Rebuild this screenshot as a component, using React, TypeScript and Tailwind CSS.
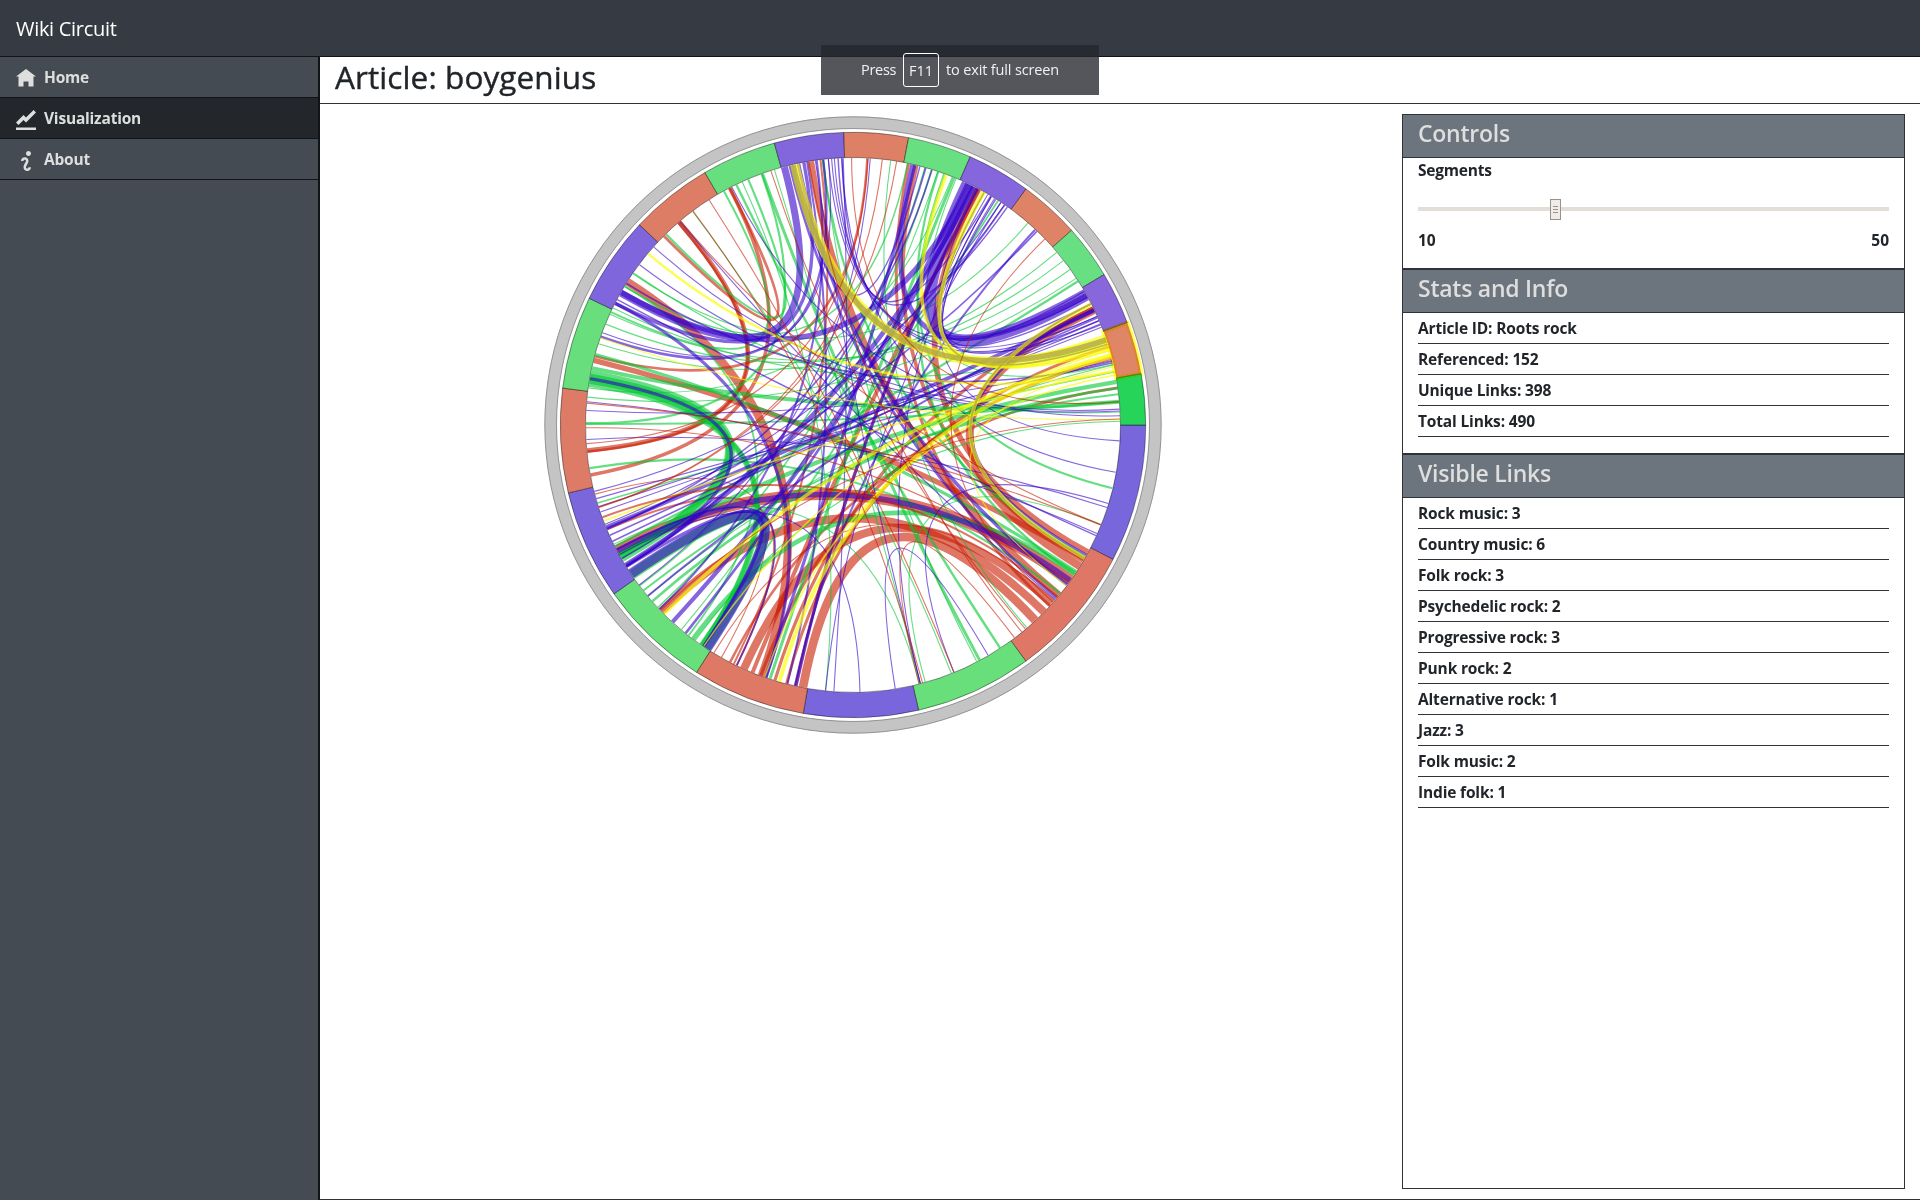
import React from "react";

const CX = 310;
const CY = 310;

const point = (radius: number, degrees: number) => {
  const t = (degrees * Math.PI) / 180;
  return `${(CX + radius * Math.cos(t)).toFixed(2)},${(CY + radius * Math.sin(t)).toFixed(2)}`;
};

const ringSlice = (inner: number, outer: number, from: number, to: number) =>
  `M${point(outer, from)}A${outer},${outer} 0 0 1 ${point(outer, to)}L${point(inner, to)}A${inner},${inner} 0 0 0 ${point(inner, from)}Z`;

const CHORD_RADIUS = 267;

const chordPath = (a: number, b: number) => `M${point(CHORD_RADIUS, a)}Q${CX},${CY} ${point(CHORD_RADIUS, b)}`;

// Segment boundaries in degrees, clockwise from three o'clock.
const bounds = [
  0, 27.34, 53.8, 77.05, 99.78, 122.3, 144.75, 166.57, 187.25, 205.65, 223.15, 239.6, 254.4, 268.2, 280.96, 293.6,
  306.25, 318.3, 329.07, 339.6, 349.9, 360,
];

const HIGHLIGHTED = 19;

const segmentFill = [
  "#7866dc", "#de7766", "#68df7a", "#7a66dc", "#de7966", "#68df7a", "#7c66dc", "#de7b66", "#68df7c", "#8066dc",
  "#de7d66", "#68df7e", "#8266dc", "#de8066", "#68df80", "#8666dc", "#de8366", "#68df82", "#8866dc", "#de8666",
  "#26d45a",
];

const palette: Record<string, [string, number]> = {
  r: ["rgb(200,28,0)", 0.6],
  g: ["rgb(0,200,48)", 0.6],
  b: ["rgb(52,0,200)", 0.6],
  y: ["rgb(250,252,0)", 0.65],
  o: ["rgb(176,168,70)", 0.8],
};

// [kind, start angle, end angle, stroke width]
type Chord = [string, number, number, number];
const T = 1.1;

const chords: Chord[] = [
  // wide red
  ["r", 47, 100.8, 8.6], ["r", 44.4, 135.8, 8], ["r", 41.9, 114.1, 8], ["r", 35.5, 152, 11],
  ["r", 31.9, 334.5, 8], ["r", 28.4, 297.9, 5.4], ["r", 39.5, 260.9, 6.6], ["r", 212.4, 110, 8],
  ["r", 30.6, 283.8, 3.6], ["r", 225, 242.5, 3], ["r", 229.4, 174.5, 4.6],
  ["r", 229.2, 174.3, 2.4], ["r", 242.5, 169.2, 3.6], ["r", 194, 30, 5.4], ["r", 194.9, 273.1, 2.6],
  ["r", 102.4, 297.6, 3], ["r", 104.4, 343, 3], ["r", 112.1, 298.2, 4], ["r", 110.2, 345.5, 3.2],
  ["r", 117.4, 352, 2.6], ["r", 119.5, 165, T], ["r", 121.4, 41, T], ["r", 115.8, 157, 2],
  ["r", 107, 334, 3.2], ["r", 116.5, 263, 2], ["r", 42.6, 282, 3],
  // green
  ["g", 188.9, 124.3, 6], ["g", 190.8, 150.3, 10], ["g", 190.3, 150.6, 7], ["g", 124.4, 189.3, 4], ["g", 145.9, 123.4, 10],
  ["g", 195.3, 33.3, 3.2], ["g", 192.3, 355, 4], ["g", 180.4, 250, 2.2], ["g", 170.7, 39.1, 2.2],
  ["g", 225.6, 246.9, 2.2], ["g", 241.1, 205, 2], ["g", 33.8, 126.8, 4.6], ["g", 34, 290, 2.4],
  ["g", 56.6, 244.1, 2.4], ["g", 61.7, 250.2, 3], ["g", 62.4, 263.6, T], ["g", 74.3, 21.9, T],
  ["g", 13.7, 288.6, 2.2], ["g", 350.7, 151, 4.4], ["g", 352.1, 138.7, 2.6], ["g", 353.4, 141.7, 2],
  ["g", 355, 180.2, 1.8], ["g", 108.1, 292.2, 3], ["g", 124.9, 302.9, 1.8], ["g", 327.4, 153, 2.4],
  ["g", 326.7, 186, T], ["g", 324.4, 204.5, T], ["g", 322, 202.2, T], ["g", 319.7, 197.7, T],
  ["g", 310.9, 214.5, T], ["g", 68.4, 233.1, T], ["g", 75.4, 252.9, T], ["g", 75.6, 153.5, T],
  ["g", 49.4, 278.1, T], ["g", 281.8, 211.2, 1.5], ["g", 285.6, 143, 1.4], ["g", 287.1, 136.9, 1.6],
  ["g", 288.5, 130, T], ["g", 291.8, 188, T], ["g", 292.7, 346.9, T], ["g", 245.5, 95.9, T],
  ["g", 263.5, 29.6, 2.2], ["g", 359.2, 126.2, T], ["g", 347, 140.2, T], ["g", 357.2, 214.7, T],
  ["g", 348.5, 163, 1.6], ["g", 342, 206, T], ["g", 211.3, 128, 1.8],
  // blue
  ["b", 146.2, 123.2, 10], ["b", 148, 124, 3], ["b", 330.8, 295.4, 12], ["b", 296, 209.8, 5.6], ["b", 255.1, 209.6, 7],
  ["b", 282.9, 331, 5], ["b", 296.8, 132.5, 4.2], ["b", 297.8, 102.3, 3], ["b", 334.5, 157.5, 4],
  ["b", 35.6, 151.9, 5.6], ["b", 36.7, 258.2, 3.6], ["b", 259.4, 207.1, 3.4], ["b", 199.3, 263.6, 2.4],
  ["b", 283.4, 109.1, 3.2], ["b", 207.1, 109, 3.2], ["b", 148.4, 297, 4.6], ["b", 190, 148.2, 3.4],
  ["b", 256.3, 40.4, 2.6], ["b", 29.1, 334.4, 2.4], ["b", 128.8, 295.2, 2.6], ["b", 313, 102.6, 2],
  ["b", 313.5, 157.3, 1.6], ["b", 3.4, 297.8, T], ["b", 10.2, 267.6, T], ["b", 17.1, 67.8, T],
  ["b", 24, 185, T], ["b", 59.6, 80.9, T], ["b", 88.5, 151, T], ["b", 94.1, 267.9, T],
  ["b", 95.9, 303.6, T], ["b", 75.4, 261.9, T], ["b", 75.4, 301.2, T], ["b", 115.8, 152.2, 1.7],
  ["b", 140.2, 334.8, 2], ["b", 154.2, 336.3, 1.6], ["b", 155.6, 337, 1.6], ["b", 158.2, 303.6, T],
  ["b", 161, 337.8, T], ["b", 162.2, 338.5, T], ["b", 164, 346.2, T], ["b", 165.6, 304.5, T],
  ["b", 176.9, 18, T], ["b", 183.1, 346, T], ["b", 200.2, 264.7, T], ["b", 216.9, 357, T],
  ["b", 221.8, 356.6, T], ["b", 243, 358, T], ["b", 265.4, 338, T], ["b", 266, 336, T],
  ["b", 266.8, 305.3, 1.5], ["b", 267.6, 301, 1.4], ["b", 264.7, 331.5, T], ["b", 300.3, 330, T],
  ["b", 301.2, 337, T], ["b", 302, 336, T], ["b", 302.3, 333, 1.4], ["b", 273.7, 143.2, T],
  ["b", 208, 24.5, 1.4], ["b", 229.6, 40.8, T], ["b", 285.8, 148, 1.8], ["b", 260.1, 104.2, 2],
  ["b", 262.2, 136.4, 2], ["b", 287.2, 157, 1.6], ["b", 212, 346.5, 1.6], ["b", 304.6, 150, 1.5],
  ["b", 256.9, 284.5, 1.4],
  // highlighted chords with their olive cores
  ["y", 257.4, 341.6, 9], ["y", 290.4, 343.6, 3.6], ["y", 299.2, 342.9, 4.2], ["y", 135, 344.8, 3.4],
  ["y", 106, 345.2, 4], ["y", 158.9, 348.4, 1.6], ["y", 219.9, 348.3, 2.4], ["y", 29.9, 333.1, 4],
  ["y", 340.4, 299.6, 1.8], ["y", 109.3, 349.2, 1.6], ["y", 343.8, 124, 1.4], ["y", 347.4, 37, T], ["y", 358.8, 199, T],
  ["o", 257, 341.4, 5.6], ["o", 299.4, 342.4, 1.6], ["o", 30, 333, 2],
  // thin red
  ["r", 21.9, 229.8, T], ["r", 22, 184.7, T], ["r", 50.8, 260.5, T], ["r", 52.8, 75.7, T],
  ["r", 67.8, 237.4, T], ["r", 179.4, 36, T], ["r", 162.1, 276.3, T], ["r", 159.8, 40, 2],
  ["r", 233.2, 74.9, T], ["r", 252.1, 49.8, T], ["r", 269.7, 355, T], ["r", 273.2, 176, T],
  ["r", 279.4, 162, T], ["r", 315.9, 41.5, T], ["r", 358.7, 136, T],
];

function CircuitChart() {
  return (
    <svg width="620" height="620" viewBox="0 0 620 620" className="block">
      <circle cx={CX} cy={CY} r="302.4" fill="none" stroke="#c4c4c4" strokeWidth="12" />
      <circle cx={CX} cy={CY} r="308.2" fill="none" stroke="#8c8c8c" strokeWidth="0.9" />
      <circle cx={CX} cy={CY} r="296.5" fill="none" stroke="#8c8c8c" strokeWidth="0.9" />
      {segmentFill.map((fill, i) => (
        <path
          key={i}
          d={ringSlice(267.5, 292.7, bounds[i], bounds[i + 1])}
          fill={fill}
          stroke={i === HIGHLIGHTED ? "none" : "#000"}
          strokeOpacity="0.5"
          strokeWidth="0.8"
        />
      ))}
      {chords.map(([kind, a, b, width], i) => (
        <path key={i} d={chordPath(a, b)} fill="none" stroke={palette[kind][0]} strokeOpacity={palette[kind][1]} strokeWidth={width} />
      ))}
      <path
        d={ringSlice(267.5, 292.7, bounds[HIGHLIGHTED], bounds[HIGHLIGHTED + 1])}
        fill="none"
        stroke="#ffff10"
        strokeOpacity="0.7"
        strokeWidth="4.4"
        className="mix-blend-multiply"
      />
    </svg>
  );
}

function NavItem({ label, icon, active = false }: { label: string; icon: React.ReactNode; active?: boolean }) {
  return (
    <a className={`flex h-[41px] items-center gap-2 border-b border-[#111417] pl-4 text-[#dedede] ${active ? "bg-[#23272b]" : ""}`}>
      <svg width="20" height="20" viewBox="0 0 8 8" fill="currentColor" className="mt-1 shrink-0">
        {icon}
      </svg>
      <span className="text-[15.5px] leading-6 font-bold tracking-[-0.2px]">{label}</span>
    </a>
  );
}

function PanelHeader({ children }: { children: React.ReactNode }) {
  return (
    <h2 className="h-11 border-y border-[#2f3236] bg-[#6c757d] px-[15px] text-[23px] leading-[37px] font-semibold tracking-[-0.25px] text-[#dedede]">
      {children}
    </h2>
  );
}

function Row({ children }: { children: React.ReactNode }) {
  return (
    <li className="h-[31px] border-b border-[#2f3236] text-[15.5px] leading-[31px] font-bold tracking-[-0.16px]">
      {children}
    </li>
  );
}

const stats = ["Article ID: Roots rock", "Referenced: 152", "Unique Links: 398", "Total Links: 490"];
const links = [
  "Rock music: 3", "Country music: 6", "Folk rock: 3", "Psychedelic rock: 2", "Progressive rock: 3",
  "Punk rock: 2", "Alternative rock: 1", "Jazz: 3", "Folk music: 2", "Indie folk: 1",
];

export default function App() {
  return (
    <div className="relative flex h-[1200px] w-[1920px] flex-col overflow-hidden bg-white font-['Open_Sans','Noto_Sans',sans-serif] text-[#212529]">
      <header className="flex h-[57px] shrink-0 items-center border-b border-[#111417] bg-[#363a42] pt-0.5 pl-4 text-white">
        <span className="text-[20px] tracking-[-0.3px]">Wiki Circuit</span>
      </header>
      <div className="flex min-h-0 flex-1">
        <nav className="w-80 shrink-0 border-r-2 border-[#111417] bg-[#444b52]">
          <NavItem label="Home" icon={<path d="M4 0l-4 3h1v4h2v-2h2v2h2v-4.03l1 .03-4-3z" />} />
          <NavItem
            label="Visualization"
            active
            icon={<path d="M7.03 0l-3.03 3-1-1-3 3.03 1 1 2-2.03 1 1 4-4-.97-1zm-7.03 7v1h8v-1h-8z" />}
          />
          <NavItem
            label="About"
            icon={
              <path
                transform="translate(2)"
                d="M3 0c-.55 0-1 .45-1 1s.45 1 1 1 1-.45 1-1-.45-1-1-1zm-1.5 2.5c-.83 0-1.5.67-1.5 1.5h1c0-.28.22-.5.5-.5s.5.22.5.5-1 1.64-1 2.5c0 .86.67 1.5 1.5 1.5s1.5-.67 1.5-1.5h-1c0 .28-.22.5-.5.5s-.5-.22-.5-.5c0-.36 1-1.84 1-2.5 0-.81-.67-1.5-1.5-1.5z"
              />
            }
          />
        </nav>
        <main className="flex min-w-0 flex-1 flex-col border-b border-[#2f3236]">
          <h1 className="h-[47px] shrink-0 border-b border-[#2f3236] pl-[15px] text-[31.5px] leading-[40px] font-medium tracking-[0.1px] [-webkit-text-stroke:0.4px_#212529]">
            Article: boygenius
          </h1>
          <div className="flex min-h-0 flex-1">
            <div className="flex-1 pt-[11px] pl-[223px]">
              <CircuitChart />
            </div>
            <aside className="mt-[10px] mr-[15px] mb-[10px] w-[503px] border-x border-b border-[#2f3236]">
              <PanelHeader>Controls</PanelHeader>
              <section className="h-[110px] px-[15px] text-[15.5px] font-bold">
                <div className="h-[26px] leading-[25px] tracking-[-0.2px]">Segments</div>
                <div className="mt-[15px] flex h-[21px] items-start">
                  <div className="mt-2 h-1 w-[132px] bg-[#e3ded8]" />
                  <div className="flex h-[21px] w-[11px] flex-col items-center justify-center gap-[2px] border border-[#97928b] bg-[#f0ebe8]">
                    <i className="h-px w-[5px] bg-[#97928b]" />
                    <i className="h-px w-[5px] bg-[#97928b]" />
                    <i className="h-px w-[5px] bg-[#97928b]" />
                  </div>
                  <div className="mt-2 h-1 flex-1 bg-[#e3ded8]" />
                </div>
                <div className="mt-[8px] flex justify-between leading-[25px]">
                  <span>10</span>
                  <span>50</span>
                </div>
              </section>
              <div className="border-t border-[#2f3236]">
                <PanelHeader>Stats and Info</PanelHeader>
              </div>
              <ul className="h-[140px] px-[15px]">
                {stats.map((s) => <Row key={s}>{s}</Row>)}
              </ul>
              <div className="border-t border-[#2f3236]">
                <PanelHeader>Visible Links</PanelHeader>
              </div>
              <ul className="px-[15px]">
                {links.map((s) => <Row key={s}>{s}</Row>)}
              </ul>
            </aside>
          </div>
        </main>
      </div>
      <div className="absolute top-[45px] left-[821px] flex h-[50px] w-[278px] bg-[rgb(36,39,45)]/78 pt-2 pl-10 text-[14.5px] leading-[33px] text-[#f1f1f1]">
        <span className="w-[42px] tracking-[-0.3px]">Press</span>
        <span className="flex h-[34px] w-9 items-center justify-center rounded-[3px] border border-white">F11</span>
        <span className="ml-[7px] tracking-[-0.15px] whitespace-nowrap">to exit full screen</span>
      </div>
    </div>
  );
}
